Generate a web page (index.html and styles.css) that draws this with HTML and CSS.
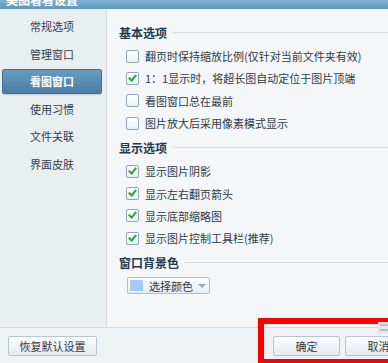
FILE: index.html
```html
<!DOCTYPE html>
<html lang="zh-CN">
<head>
<meta charset="UTF-8">
<title>设置</title>
<link rel="stylesheet" href="styles.css">
</head>
<body>
<div class="dlg">
 <div class="title"><span>美图看看设置</span></div>

 <div class="main">
  <ul class="side">
   <li>常规选项</li>
   <li>管理窗口</li>
   <li class="on">看图窗口</li>
   <li>使用习惯</li>
   <li>文件关联</li>
   <li>界面皮肤</li>
  </ul>

  <div class="content">
   <h3 class="grp"><span>基本选项</span></h3>
   <label class="row"><i class="cb"></i>翻页时保持缩放比例(仅针对当前文件夹有效)</label>
   <label class="row"><i class="cb ck"></i>1：1显示时，将超长图自动定位于图片顶端</label>
   <label class="row"><i class="cb"></i>看图窗口总在最前</label>
   <label class="row"><i class="cb"></i>图片放大后采用像素模式显示</label>

   <h3 class="grp"><span>显示选项</span></h3>
   <label class="row"><i class="cb ck"></i>显示图片阴影</label>
   <label class="row"><i class="cb ck"></i>显示左右翻页箭头</label>
   <label class="row"><i class="cb ck"></i>显示底部缩略图</label>
   <label class="row"><i class="cb ck"></i>显示图片控制工具栏(推荐)</label>

   <h3 class="grp"><span>窗口背景色</span></h3>
   <div class="color-btn"><i class="swatch"></i>选择颜色<i class="arrow"></i></div>
  </div>
 </div>

 <div class="foot">
  <button class="btn reset">恢复默认设置</button>
  <button class="btn ok">确定</button>
  <button class="btn">取消</button>
 </div>

 <div class="mark"></div>
 <div class="grip"><i></i><i></i></div>
</div>
</body>
</html>
```

FILE: styles.css
```css
html, body { margin: 0; padding: 0; }
body { font: 11px "Noto Sans CJK SC", "Liberation Sans", sans-serif; color: #2e3b46; }

.dlg { position: relative; width: 388px; height: 363px; overflow: hidden;
       display: flex; flex-direction: column; background: #f4f6f8; }

.title { height: 9px; overflow: hidden; color: #fff; font-size: 12px;
         background: linear-gradient(#7db2d2, #5f95ba); }
.title span { display: block; line-height: 12px; margin: -6px 0 0 6px; font-weight: bold; }

.main { flex: 1; display: flex; min-height: 0; }

.side { width: 106px; margin: 0; padding: 5px 0 0; list-style: none;
        background: #e9eef1; border-right: 1px solid #d2dbe2; }
.side li { height: 25px; line-height: 25px; margin: 0 4px 2.5px 2px; text-align: center;
           color: #34414c; border-radius: 2px; }
.side li.on { color: #fff; font-weight: bold;
              background: linear-gradient(#6a9cc0, #4b7ea4);
              border: 1px solid #41729a; height: 23px; line-height: 23px;
              box-shadow: 0 1px 1px rgba(0,0,0,0.15); }

.content { flex: 1; padding: 15px 0 0 12px; }

.grp { display: flex; align-items: center; margin: 0 0 5px; height: 16px;
       font-size: 12px; font-weight: bold; color: #1f3a4f; }
.grp::after { content: ''; flex: 1; height: 1px; margin-left: 6px; background: #d5dee6; }
.grp + .row { margin-top: 0; }
.row + .grp { margin-top: 5px; }

.row { display: flex; align-items: center; height: 22.3px; padding-left: 7px; white-space: nowrap; }

.cb { position: relative; display: inline-block; width: 11px; height: 11px; margin-right: 6px;
      border: 1px solid #8fa6bc; border-radius: 2px;
      background: linear-gradient(#fff, #eaf0f5); }
.cb.ck::after { content: ''; position: absolute; left: 3px; top: 0px; width: 3px; height: 6px;
                border: solid #27a53b; border-width: 0 2px 2px 0; transform: rotate(40deg); }

.color-btn { display: inline-flex; align-items: center; margin: 2px 0 0 8px;
             width: 81px; height: 15px; border: 1px solid #aebfce; border-radius: 2px;
             background: linear-gradient(#fdfeff, #e6edf3); color: #2e3b46; }
.swatch { width: 13px; height: 11px; margin: 0 6px 0 2px; background: #9fcbf6; }
.arrow { width: 0; height: 0; margin-left: 5px; border: 4px solid transparent;
         border-top: 4px solid #94aabd; border-bottom: 0; }

.foot { height: 35px; flex: none; display: flex; align-items: center;
        border-top: 1px solid #d3dbe2; background: #eef2f5; padding-left: 8px; }
.btn { flex: none; height: 20px; width: 67px; padding: 0; font: inherit; color: #2e3b46;
       border: 1px solid #b7c5d1; border-radius: 2px;
       background: linear-gradient(#fbfcfd, #e4eaf0); margin: 0 0 0 5px; }
.btn.reset { width: 89px; margin-left: 0; }
.btn.ok { margin-left: 176px; }

.mark { position: absolute; left: 258px; top: 318px; width: 140px; height: 35px;
        border: 6px solid #f00; }

.grip { position: absolute; left: 378px; top: 322px; width: 12px; height: 12px;
        background: #e4e7ea; display: flex; flex-direction: column; gap: 3px; padding: 2px; box-sizing: border-box; }
.grip i { display: block; height: 2px; background: #b9c0c7; }
```
